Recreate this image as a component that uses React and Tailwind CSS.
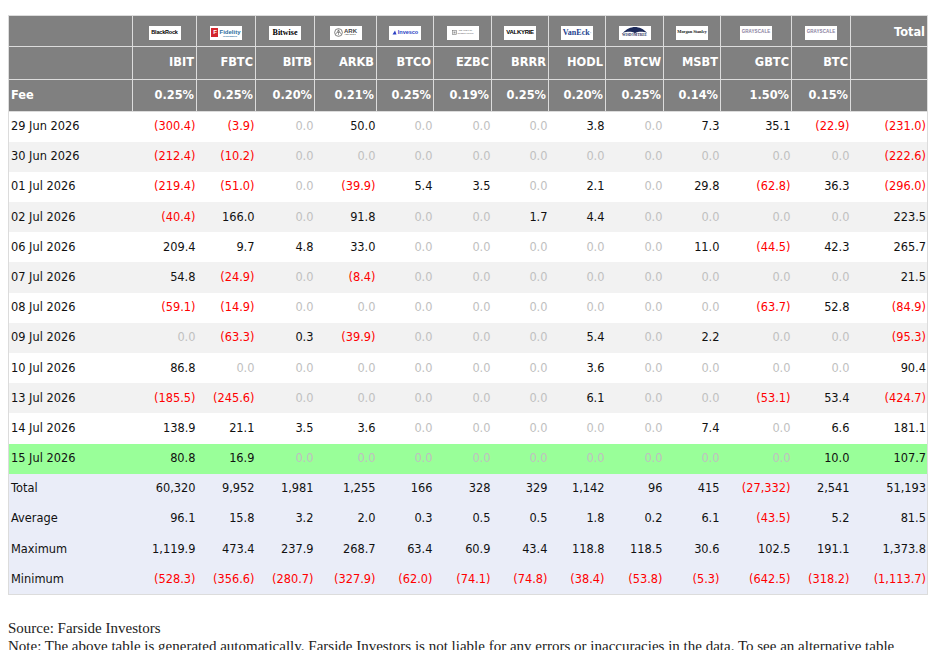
import React from 'react';

const funds = [
  { ticker: 'IBIT', fee: '0.25%', logo: 'blackrock' },
  { ticker: 'FBTC', fee: '0.25%', logo: 'fidelity' },
  { ticker: 'BITB', fee: '0.20%', logo: 'bitwise' },
  { ticker: 'ARKB', fee: '0.21%', logo: 'ark' },
  { ticker: 'BTCO', fee: '0.25%', logo: 'invesco' },
  { ticker: 'EZBC', fee: '0.19%', logo: 'franklin' },
  { ticker: 'BRRR', fee: '0.25%', logo: 'valkyrie' },
  { ticker: 'HODL', fee: '0.20%', logo: 'vaneck' },
  { ticker: 'BTCW', fee: '0.25%', logo: 'wisdomtree' },
  { ticker: 'MSBT', fee: '0.14%', logo: 'morgan' },
  { ticker: 'GBTC', fee: '1.50%', logo: 'grayscale' },
  { ticker: 'BTC', fee: '0.15%', logo: 'grayscale' },
];

const widths = ['w-[124px]', 'w-[64px]', 'w-[59px]', 'w-[59px]', 'w-[62px]', 'w-[57px]', 'w-[58px]', 'w-[57px]', 'w-[57px]', 'w-[58px]', 'w-[57px]', 'w-[71px]', 'w-[59px]', 'w-[77px]'];

const rows = [
  ['29 Jun 2026', '(300.4)', '(3.9)', '0.0', '50.0', '0.0', '0.0', '0.0', '3.8', '0.0', '7.3', '35.1', '(22.9)', '(231.0)'],
  ['30 Jun 2026', '(212.4)', '(10.2)', '0.0', '0.0', '0.0', '0.0', '0.0', '0.0', '0.0', '0.0', '0.0', '0.0', '(222.6)'],
  ['01 Jul 2026', '(219.4)', '(51.0)', '0.0', '(39.9)', '5.4', '3.5', '0.0', '2.1', '0.0', '29.8', '(62.8)', '36.3', '(296.0)'],
  ['02 Jul 2026', '(40.4)', '166.0', '0.0', '91.8', '0.0', '0.0', '1.7', '4.4', '0.0', '0.0', '0.0', '0.0', '223.5'],
  ['06 Jul 2026', '209.4', '9.7', '4.8', '33.0', '0.0', '0.0', '0.0', '0.0', '0.0', '11.0', '(44.5)', '42.3', '265.7'],
  ['07 Jul 2026', '54.8', '(24.9)', '0.0', '(8.4)', '0.0', '0.0', '0.0', '0.0', '0.0', '0.0', '0.0', '0.0', '21.5'],
  ['08 Jul 2026', '(59.1)', '(14.9)', '0.0', '0.0', '0.0', '0.0', '0.0', '0.0', '0.0', '0.0', '(63.7)', '52.8', '(84.9)'],
  ['09 Jul 2026', '0.0', '(63.3)', '0.3', '(39.9)', '0.0', '0.0', '0.0', '5.4', '0.0', '2.2', '0.0', '0.0', '(95.3)'],
  ['10 Jul 2026', '86.8', '0.0', '0.0', '0.0', '0.0', '0.0', '0.0', '3.6', '0.0', '0.0', '0.0', '0.0', '90.4'],
  ['13 Jul 2026', '(185.5)', '(245.6)', '0.0', '0.0', '0.0', '0.0', '0.0', '6.1', '0.0', '0.0', '(53.1)', '53.4', '(424.7)'],
  ['14 Jul 2026', '138.9', '21.1', '3.5', '3.6', '0.0', '0.0', '0.0', '0.0', '0.0', '7.4', '0.0', '6.6', '181.1'],
  ['15 Jul 2026', '80.8', '16.9', '0.0', '0.0', '0.0', '0.0', '0.0', '0.0', '0.0', '0.0', '0.0', '10.0', '107.7'],
];

const summary = [
  ['Total', '60,320', '9,952', '1,981', '1,255', '166', '328', '329', '1,142', '96', '415', '(27,332)', '2,541', '51,193'],
  ['Average', '96.1', '15.8', '3.2', '2.0', '0.3', '0.5', '0.5', '1.8', '0.2', '6.1', '(43.5)', '5.2', '81.5'],
  ['Maximum', '1,119.9', '473.4', '237.9', '268.7', '63.4', '60.9', '43.4', '118.8', '118.5', '30.6', '102.5', '191.1', '1,373.8'],
  ['Minimum', '(528.3)', '(356.6)', '(280.7)', '(327.9)', '(62.0)', '(74.1)', '(74.8)', '(38.4)', '(53.8)', '(5.3)', '(642.5)', '(318.2)', '(1,113.7)'],
];

const valueColor = (v) => {
  if (v.startsWith('(')) return 'text-[#ff0000]';
  if (v === '0.0') return 'text-[#c0c0c0]';
  return 'text-[#111]';
};

const Logo = ({ name }) => {
  let inner = null;
  if (name === 'blackrock') {
    inner = <span className="text-[5.5px] font-bold tracking-[-0.2px] text-black font-['Liberation_Sans',sans-serif]">BlackRock</span>;
  } else if (name === 'fidelity') {
    inner = (
      <div className="flex items-center gap-[1px]">
        <span className="w-[7px] h-[9px] bg-[#d3262d] text-white text-[6px] font-bold leading-[9px] text-center font-['Liberation_Sans',sans-serif]">F</span>
        <div className="flex flex-col leading-none">
          <span className="text-[6px] font-bold text-[#2e6fa0] font-['Liberation_Sans',sans-serif]">Fidelity</span>
          <span className="text-[2px] text-[#2e6fa0] font-['Liberation_Sans',sans-serif]">INVESTMENTS</span>
        </div>
      </div>
    );
  } else if (name === 'bitwise') {
    inner = <span className="text-[8px] text-black font-['Liberation_Serif',serif]">Bitwise</span>;
  } else if (name === 'ark') {
    inner = (
      <div className="flex items-center gap-[1px]">
        <svg width="9" height="9" viewBox="0 0 10 10">
          <circle cx="5" cy="5" r="4.3" fill="none" stroke="#555" strokeWidth="0.8" />
          <path d="M2 7 L5 2 L8 7 M3.5 5 L6.5 5 M5 2 L5 8" stroke="#555" strokeWidth="0.6" fill="none" />
        </svg>
        <div className="flex flex-col leading-none">
          <span className="text-[6px] text-[#444] font-['Liberation_Sans',sans-serif]">ARK</span>
          <span className="text-[2.5px] tracking-[0.4px] text-[#444] font-['Liberation_Sans',sans-serif]">INVEST</span>
        </div>
      </div>
    );
  } else if (name === 'invesco') {
    inner = (
      <div className="flex items-center gap-[1px]">
        <svg width="5" height="5" viewBox="0 0 10 10">
          <path d="M1 9 L6 1 L9 9 Z" fill="#2a3fc4" />
        </svg>
        <span className="text-[5.5px] font-bold text-[#2a3fc4] font-['Liberation_Sans',sans-serif]">Invesco</span>
      </div>
    );
  } else if (name === 'franklin') {
    inner = (
      <div className="flex items-center gap-[1px]">
        <svg width="5" height="5" viewBox="0 0 10 10">
          <rect x="1" y="1" width="8" height="8" fill="none" stroke="#777" strokeWidth="1.2" />
          <path d="M3 3 H7 V7 H3 Z" fill="#999" />
        </svg>
        <div className="flex flex-col leading-none">
          <span className="text-[2.5px] text-[#666] font-['Liberation_Serif',serif]">FRANKLIN</span>
          <span className="text-[2.5px] text-[#666] font-['Liberation_Serif',serif]">TEMPLETON</span>
        </div>
      </div>
    );
  } else if (name === 'valkyrie') {
    inner = <span className="text-[6px] font-bold tracking-[-0.3px] text-black font-['Liberation_Sans',sans-serif]">VALKYRIE</span>;
  } else if (name === 'vaneck') {
    inner = <span className="text-[8px] font-bold text-[#1d3f8f] font-['Liberation_Serif',serif]">VanEck<sup className="text-[2px]">®</sup></span>;
  } else if (name === 'wisdomtree') {
    inner = (
      <div className="flex flex-col items-center leading-none">
        <svg width="26" height="7" viewBox="0 0 26 7">
          <path d="M1 6 C4 2 9 0 13 0 C17 0 22 2 25 6 C20 4 16 5 13 6 C10 5 6 4 1 6 Z" fill="#1c2a5a" />
          <path d="M12 3 L13 7 L14 3 Z" fill="#1c2a5a" />
        </svg>
        <span className="text-[3.5px] text-[#1c2a5a] font-['Liberation_Serif',serif]">WISDOMTREE</span>
      </div>
    );
  } else if (name === 'morgan') {
    inner = <span className="text-[4.5px] text-[#222] tracking-[-0.1px] font-['Liberation_Serif',serif]">Morgan Stanley</span>;
  } else if (name === 'grayscale') {
    inner = <span className="text-[4.5px] text-[#8a7fa0] tracking-[0.1px] font-['Liberation_Sans',sans-serif]">GRAYSCALE</span>;
  }
  return (
    <div className="mx-auto mt-[3px] w-[32px] h-[14px] bg-white flex items-center justify-center overflow-hidden">
      {inner}
    </div>
  );
};

const headCell = 'bg-[#808080] border border-[#dcdcdc] text-white font-bold text-right pr-[2px] align-middle';

export default function App() {
  return (
    <div className="bg-white min-h-screen px-2 pt-[15px] font-['DejaVu_Sans',sans-serif]">
      <table className="table-fixed border-collapse w-[919px] text-[11.4px] border border-[#dcdcdc]">
        <colgroup>
          {widths.map((w, i) => (
            <col key={i} className={w} />
          ))}
        </colgroup>
        <thead>
          <tr className="h-[31px]">
            <th className={headCell}></th>
            {funds.map((f) => (
              <th key={f.ticker} className={headCell + ' !text-center !pr-0'}>
                <Logo name={f.logo} />
              </th>
            ))}
            <th className={headCell + ' pt-[3px]'}>Total</th>
          </tr>
          <tr className="h-[33px]">
            <th className={headCell}></th>
            {funds.map((f) => (
              <th key={f.ticker} className={headCell}>{f.ticker}</th>
            ))}
            <th className={headCell}></th>
          </tr>
          <tr className="h-[32px]">
            <th className={headCell + ' !text-left pl-[2px]'}>Fee</th>
            {funds.map((f) => (
              <th key={f.ticker} className={headCell}>{f.fee}</th>
            ))}
            <th className={headCell}></th>
          </tr>
        </thead>
        <tbody>
          {rows.map((r, i) => {
            const last = i === rows.length - 1;
            const bg = last ? 'bg-[#99ff99]' : i % 2 === 1 ? 'bg-[#f2f2f2]' : 'bg-white';
            return (
              <tr key={r[0]} className={'h-[30.2px] ' + bg}>
                <td className="pl-[2px] text-[#111]">{r[0]}</td>
                {r.slice(1).map((v, j) => (
                  <td key={j} className={'text-right pr-[1px] ' + valueColor(v)}>{v}</td>
                ))}
              </tr>
            );
          })}
          {summary.map((r) => (
            <tr key={r[0]} className="h-[30.2px] bg-[#eaedf8]">
              <td className="pl-[2px] text-[#111]">{r[0]}</td>
              {r.slice(1).map((v, j) => (
                <td key={j} className={'text-right pr-[1px] ' + valueColor(v)}>{v}</td>
              ))}
            </tr>
          ))}
        </tbody>
      </table>

      <div className="mt-[24px] font-['Liberation_Serif',serif] text-[15px] leading-[18px] text-[#222]">
        <p>Source: Farside Investors</p>
        <p>Note: The above table is generated automatically. Farside Investors is not liable for any errors or inaccuracies in the data. To see an alternative table</p>
      </div>
    </div>
  );
}
